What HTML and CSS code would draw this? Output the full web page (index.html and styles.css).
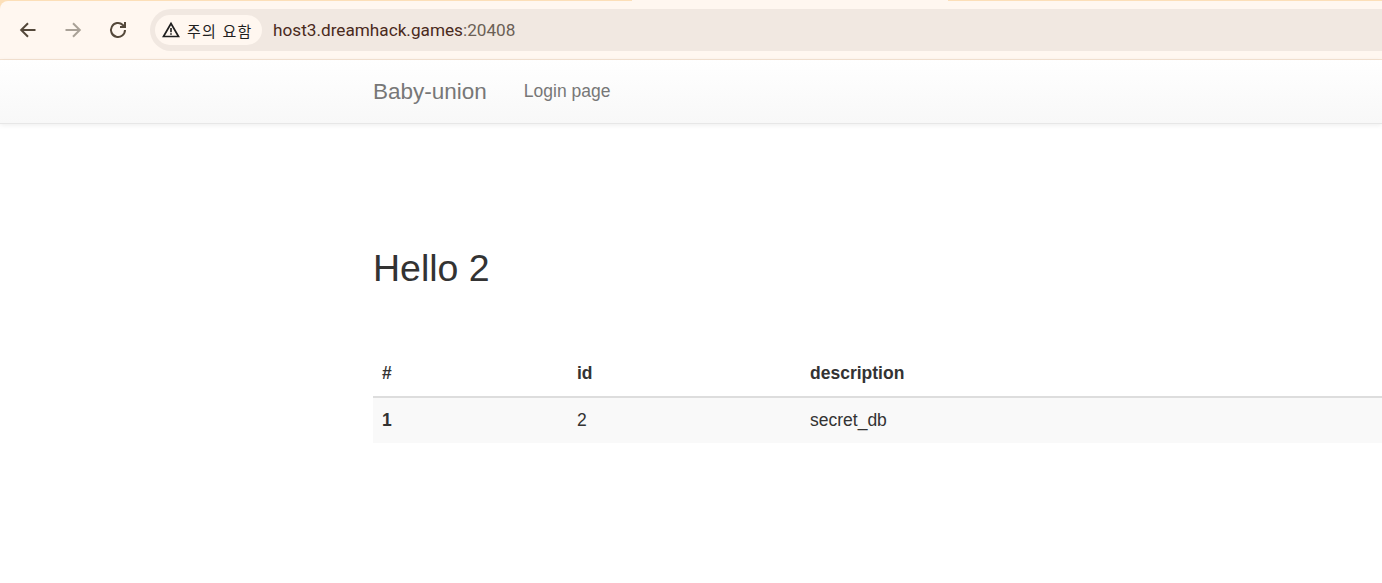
FILE: index.html
```html
<!DOCTYPE html>
<html lang="ko">
<head>
<meta charset="utf-8">
<title>Baby-union</title>
<link rel="stylesheet" href="styles.css">
</head>
<body>
<header class="chrome">
  <div class="tabstrip"><div class="active-tab"></div></div>
  <div class="toolbar">
    <svg class="nav-icon" viewBox="0 0 24 24"><path d="M19.5 12H5.5M12 5.2 5.2 12l6.8 6.8" fill="none" stroke="#54483a" stroke-width="2"/></svg>
    <svg class="nav-icon" viewBox="0 0 24 24"><path d="M4.5 12h14M12 5.2l6.8 6.8-6.8 6.8" fill="none" stroke="#a9a197" stroke-width="2"/></svg>
    <svg class="nav-icon" viewBox="0 0 24 24"><path d="M19 12a7 7 0 1 1-2.2-5.1L19 9M19 4v5h-5" fill="none" stroke="#54483a" stroke-width="2"/></svg>
    <div class="omnibox">
      <div class="chip">
        <svg class="warn" viewBox="0 0 18 18"><path d="M9 2.5 16.5 15.5H1.5Z" fill="none" stroke="#1f1f1f" stroke-width="1.7"/><path d="M9 7v4.2M9 12.2v1.6" stroke="#1f1f1f" stroke-width="1.6"/></svg>
        <span>주의 요함</span>
      </div>
      <div class="url">host3.dreamhack.games<span class="port">:20408</span></div>
    </div>
  </div>
</header>
<nav class="navbar">
  <a class="brand">Baby-union</a>
  <a class="nav-link">Login page</a>
</nav>
<main class="container">
  <h1>Hello 2</h1>
  <table>
    <thead><tr><th class="c1">#</th><th class="c2">id</th><th>description</th></tr></thead>
    <tbody><tr><th>1</th><td>2</td><td>secret_db</td></tr></tbody>
  </table>
</main>
</body>
</html>
```
FILE: styles.css
```css
* { box-sizing: border-box; }
html, body { margin: 0; padding: 0; height: 100%; overflow: hidden; background: #fff; }
body { font-family: "Liberation Sans", Arial, sans-serif; font-size: 17.5px; color: #333; }
.chrome { background: #fcdfb8; }
.tabstrip { height: 1px; padding-left: 632px; }
.active-tab { width: 316px; height: 1px; background: #fff7f0; }
.toolbar { height: 59px; background: #fff7f0; border-bottom: 1px solid #f5e3d2; border-top-left-radius: 8px; display: flex; align-items: center; padding-left: 16px; }
.nav-icon { width: 24px; height: 24px; margin-right: 21px; flex: none; }
.omnibox { flex: 1; height: 42px; margin-left: -1px; background: #f1e8e1; border-radius: 21px 0 0 21px; display: flex; align-items: center; padding-left: 5px; }
.chip { height: 30px; width: 107px; background: #fff7f0; border-radius: 15px; display: flex; align-items: center; padding-left: 7px; gap: 7px; font: 15px "Noto Sans CJK KR", sans-serif; letter-spacing: 1.2px; color: #1f1f1f; }
.warn { width: 18px; height: 18px; flex: none; }
.url { margin-left: 11px; font: 17.2px Roboto, "Liberation Sans", sans-serif; color: #4a2a1c; }
.port { color: #6b5f55; }
.navbar { height: 64px; padding-left: 358px; display: flex; align-items: center; background: linear-gradient(#fff, #f8f8f8); border-bottom: 1px solid #e7e7e7; box-shadow: 0 1px 5px rgba(0,0,0,.075); }
.brand { font-size: 22.5px; color: #777; padding: 0 15px; }
.nav-link { font-size: 17.5px; color: #777; padding: 0 15px; margin-left: 7px; }
.container { padding-left: 373px; }
h1 { font-size: 37.5px; font-weight: 400; line-height: 43px; margin: 123px 0 0; color: #333; }
table { width: 100%; border-collapse: collapse; margin-top: 60px; }
th, td { text-align: left; padding: 9px; line-height: 25px; font-size: 17.5px; }
thead th { border-bottom: 2px solid #ddd; height: 47px; }
tbody th, tbody td { background: #f9f9f9; height: 46px; }
.c1 { width: 195px; }
.c2 { width: 233px; }
```
